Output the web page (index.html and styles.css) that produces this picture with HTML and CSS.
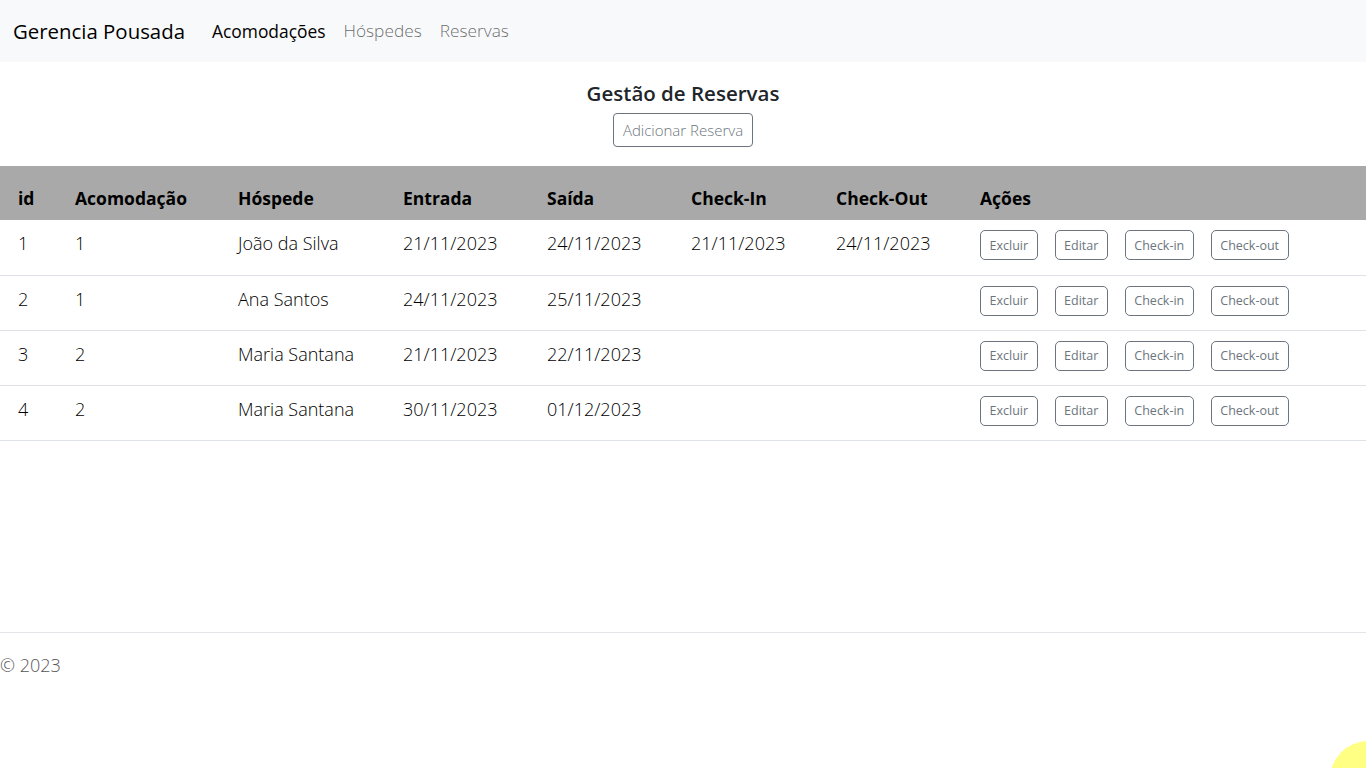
FILE: index.html
```html
<!DOCTYPE html>
<html lang="pt-BR">
<head>
<meta charset="utf-8">
<title>Gerencia Pousada</title>
<link rel="stylesheet" href="styles.css">
</head>
<body>
<nav class="navbar">
  <a class="brand" href="#">Gerencia Pousada</a>
  <ul class="nav">
    <li><a class="nav-link active" href="#">Acomodações</a></li>
    <li><a class="nav-link" href="#">Hóspedes</a></li>
    <li><a class="nav-link" href="#">Reservas</a></li>
  </ul>
</nav>
<main class="main">
  <section class="head">
    <h2 class="title">Gestão de Reservas</h2>
    <button class="btn btn-add">Adicionar Reserva</button>
  </section>
  <table class="table">
    <thead>
      <tr>
        <th class="c1">id</th>
        <th class="c2">Acomodação</th>
        <th class="c3">Hóspede</th>
        <th class="c4">Entrada</th>
        <th class="c5">Saída</th>
        <th class="c6">Check-In</th>
        <th class="c7">Check-Out</th>
        <th>Ações</th>
      </tr>
    </thead>
    <tbody>
      <tr>
        <td>1</td><td>1</td><td>João da Silva</td><td>21/11/2023</td><td>24/11/2023</td><td>21/11/2023</td><td>24/11/2023</td>
        <td><div class="actions"><button class="btn btn-sm">Excluir</button><button class="btn btn-sm">Editar</button><button class="btn btn-sm">Check-in</button><button class="btn btn-sm">Check-out</button></div></td>
      </tr>
      <tr>
        <td>2</td><td>1</td><td>Ana Santos</td><td>24/11/2023</td><td>25/11/2023</td><td></td><td></td>
        <td><div class="actions"><button class="btn btn-sm">Excluir</button><button class="btn btn-sm">Editar</button><button class="btn btn-sm">Check-in</button><button class="btn btn-sm">Check-out</button></div></td>
      </tr>
      <tr>
        <td>3</td><td>2</td><td>Maria Santana</td><td>21/11/2023</td><td>22/11/2023</td><td></td><td></td>
        <td><div class="actions"><button class="btn btn-sm">Excluir</button><button class="btn btn-sm">Editar</button><button class="btn btn-sm">Check-in</button><button class="btn btn-sm">Check-out</button></div></td>
      </tr>
      <tr>
        <td>4</td><td>2</td><td>Maria Santana</td><td>30/11/2023</td><td>01/12/2023</td><td></td><td></td>
        <td><div class="actions"><button class="btn btn-sm">Excluir</button><button class="btn btn-sm">Editar</button><button class="btn btn-sm">Check-in</button><button class="btn btn-sm">Check-out</button></div></td>
      </tr>
    </tbody>
  </table>
</main>
<footer class="footer">© 2023</footer>
<div class="cursor-dot"></div>
</body>
</html>
```
FILE: styles.css
```css
* { box-sizing: border-box; }
html, body { margin: 0; padding: 0; }
body {
  font-family: "Open Sans", "Noto Sans", sans-serif;
  font-size: 17px;
  color: #212529;
  background: #fff;
  overflow: hidden;
}
.navbar {
  display: flex;
  align-items: center;
  height: 62px;
  padding: 0 13px;
  background: #f8f9fa;
}
.brand {
  font-size: 20.4px;
  color: #000;
  text-decoration: none;
  margin-right: 18px;
}
.nav {
  display: flex;
  list-style: none;
  margin: 0;
  padding: 0;
}
.nav-link {
  display: block;
  padding: 0 9px;
  font-size: 17.3px;
  font-weight: 300;
  color: rgba(0,0,0,0.6);
  text-decoration: none;
}
.nav-link.active { color: #000; font-weight: 400; font-size: 17.4px; }
.main { min-height: 571px; border-bottom: 1px solid #e3e5e8; }
.head {
  display: flex;
  flex-direction: column;
  align-items: center;
  padding-top: 17px;
  padding-bottom: 19px;
}
.title {
  margin: 0 0 6px;
  font-size: 20.5px;
  font-weight: 600;
  line-height: 28px;
  color: #212529;
}
.btn {
  font-family: "Open Sans", "Noto Sans", sans-serif;
  background: #fff;
  color: #6c757d;
  border: 1px solid #6c757d;
  border-radius: 4px;
  cursor: pointer;
}
.btn-add {
  height: 34px;
  padding: 0 9px;
  font-size: 15px;
  font-weight: 300;
}
.table {
  width: 100%;
  border-collapse: collapse;
}
.table th {
  background: #a9a9a9;
  color: #000;
  font-weight: 700;
  font-size: 17.5px;
  text-align: left;
  vertical-align: bottom;
  padding: 20px 18px 10px;
  line-height: 24px;
  height: 54px;
}
.table td {
  vertical-align: top;
  padding: 11px 18px 10px;
  line-height: 24px;
  height: 55px;
  font-size: 18px;
  font-weight: 300;
  color: #000;
  border-bottom: 1px solid #dee2e6;
}
.c1 { width: 57px; }
.c2 { width: 163px; }
.c3 { width: 165px; }
.c4 { width: 144px; }
.c5 { width: 144px; }
.c6 { width: 145px; }
.c7 { width: 144px; }
.actions {
  display: flex;
  gap: 17px;
  margin-top: -1px;
}
.btn-sm {
  height: 30px;
  padding: 0 8.5px;
  font-size: 12.5px;
  border-radius: 5px;
}
.footer {
  padding-top: 20px;
  font-size: 18px;
  font-weight: 300;
  color: #555;
}
.cursor-dot {
  position: fixed;
  left: 1330px;
  top: 741px;
  width: 76px;
  height: 76px;
  border-radius: 50%;
  background: rgba(255, 255, 110, 0.85);
}
```
